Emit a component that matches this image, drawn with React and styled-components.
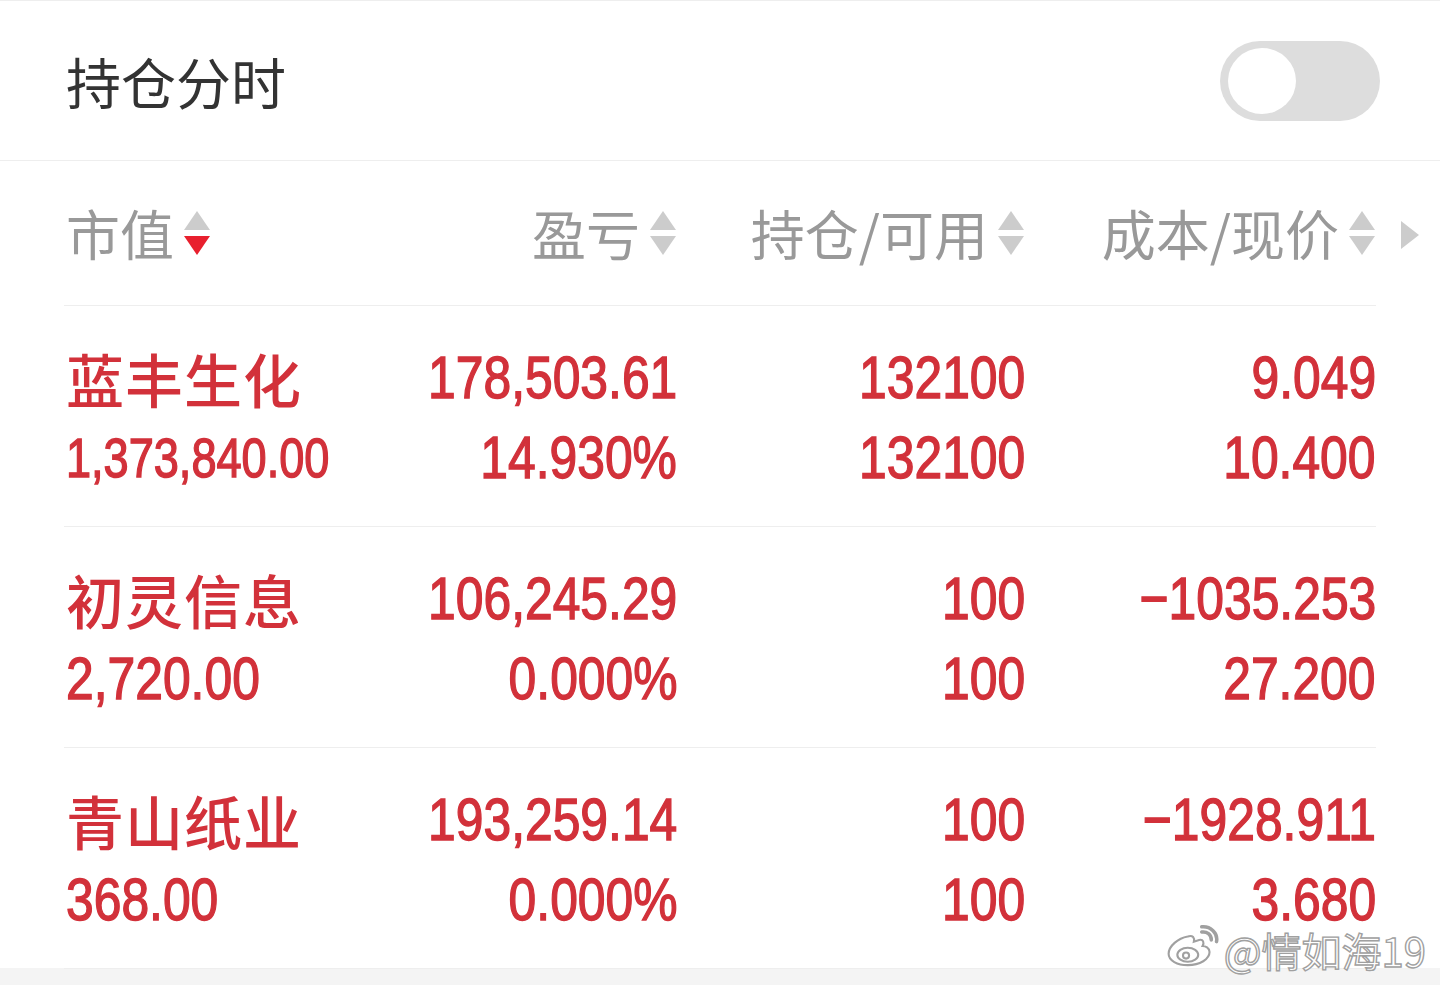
import React from 'react';
import styled, { createGlobalStyle } from 'styled-components';

const RED = '#d2313a';

const GlobalStyle = createGlobalStyle`
  html, body {
    margin: 0;
    padding: 0;
    background: #f4f4f4;
  }
  body {
    font-family: "Noto Sans CJK SC", "Noto Sans", sans-serif;
  }
`;

const rows = [
  {
    name: '蓝丰生化',
    value: '1,373,840.00',
    pnl: '178,503.61',
    pct: '14.930%',
    hold: '132100',
    avail: '132100',
    cost: '9.049',
    price: '10.400',
  },
  {
    name: '初灵信息',
    value: '2,720.00',
    pnl: '106,245.29',
    pct: '0.000%',
    hold: '100',
    avail: '100',
    cost: '-1035.253',
    price: '27.200',
  },
  {
    name: '青山纸业',
    value: '368.00',
    pnl: '193,259.14',
    pct: '0.000%',
    hold: '100',
    avail: '100',
    cost: '-1928.911',
    price: '3.680',
  },
];

const columns = [
  { label: '市值', align: 'left', active: true },
  { label: '盈亏', align: 'right' },
  { label: '持仓/可用', align: 'right' },
  { label: '成本/现价', align: 'right' },
];

const App = () => {
  return (
    <>
      <GlobalStyle />
      <Page>
        <TopBar>
          <Title>持仓分时</Title>
          <Toggle>
            <Knob />
          </Toggle>
        </TopBar>

        <Table>
          <HeaderRow>
            {columns.map(col => (
              <HeaderCell key={col.label} $align={col.align}>
                {col.label}
                <SortIcon active={col.active} />
              </HeaderCell>
            ))}
            <MoreArrow />
          </HeaderRow>

          {rows.map(row => (
            <Row key={row.name}>
              <Cell $align="left">
                <Name>{row.name}</Name>
                {/* long values shrink to fit the first column */}
                <Num $align="left" $small={row.value.length > 10}>{row.value}</Num>
              </Cell>
              <Cell $align="right">
                <Num $align="right">{row.pnl}</Num>
                <Num $align="right">{row.pct}</Num>
              </Cell>
              <Cell $align="right">
                <Num $align="right">{row.hold}</Num>
                <Num $align="right">{row.avail}</Num>
              </Cell>
              <Cell $align="right">
                <Num $align="right">{row.cost.replace('-', '\u2212')}</Num>
                <Num $align="right">{row.price}</Num>
              </Cell>
            </Row>
          ))}

          <Watermark>
            <WeiboLogo />
            <WatermarkText>@情如海19</WatermarkText>
          </Watermark>
        </Table>
        <Footer />
      </Page>
    </>
  );
};

const SortIcon = ({ active }) => (
  <SortSvg width="28" height="48" viewBox="0 0 28 48">
    <polygon points="14,2 27,21 1,21" fill="#cccccc" />
    <polygon points="1,27 27,27 14,46" fill={active ? '#e8202e' : '#cccccc'} />
  </SortSvg>
);

const MoreArrow = () => (
  <ArrowSvg width="20" height="30" viewBox="0 0 20 30">
    <polygon points="1,1 19,15 1,29" fill="#cccccc" />
  </ArrowSvg>
);

const WeiboLogo = () => (
  <svg width="54" height="42" viewBox="0 0 62 46">
    <g fill="#ffffff" stroke="#a0a0a0" strokeWidth="2.4">
      <path d="M25 12c-11 2-22 11-22 20 0 8 10 13 22 13 14 0 25-7 25-15 0-5-5-7-8-7 2-4 1-8-4-7-3 1-6 2-6 2 1-4-1-8-7-6z" />
      <ellipse cx="25" cy="33" rx="12" ry="8" />
      <circle cx="23" cy="34" r="3.5" />
      <path d="M41 7c6-1 11 3 11 9" fill="none" strokeWidth="4" strokeLinecap="round" />
      <path d="M41 1c10-1 19 7 17 17" fill="none" strokeWidth="4" strokeLinecap="round" />
    </g>
  </svg>
);

// Styled Components
const Page = styled.div`
  width: 1440px;
  min-height: 985px;
  background: #f4f4f4;
`;

const TopBar = styled.div`
  display: flex;
  align-items: center;
  justify-content: space-between;
  padding: 0 60px 0 66px;
  background: #ffffff;
  border-top: 1px solid #eeeeee;
  border-bottom: 1px solid #eeeeee;
  box-sizing: border-box;
  height: 161px;
`;

const Title = styled.div`
  font-size: 55px;
  color: #333333;
  line-height: 1;
`;

const Toggle = styled.div`
  width: 160px;
  height: 80px;
  border-radius: 40px;
  background: #dddddd;
  display: flex;
  align-items: center;
  padding-left: 8px;
  box-sizing: border-box;
`;

const Knob = styled.div`
  width: 68px;
  height: 66px;
  border-radius: 50%;
  background: #ffffff;
`;

const Table = styled.div`
  position: relative;
  background: #ffffff;
  padding: 0 64px;
  height: 807px;
  box-sizing: border-box;
`;

const gridCols = `320px 293px 348px 351px`;

const HeaderRow = styled.div`
  position: relative;
  display: grid;
  grid-template-columns: ${gridCols};
  align-items: center;
  height: 144px;
  border-bottom: 1px solid #eeeeee;
`;

const HeaderCell = styled.div`
  display: flex;
  align-items: center;
  justify-content: ${props => (props.$align === 'left' ? 'flex-start' : 'flex-end')};
  padding-left: 2px;
  gap: 9px;
  font-size: 54px;
  line-height: 1;
  color: #999999;
`;

const SortSvg = styled.svg`
  display: block;
  flex: none;
`;

const ArrowSvg = styled.svg`
  position: absolute;
  right: -44px;
  top: 59px;
`;

const Row = styled.div`
  display: grid;
  grid-template-columns: ${gridCols};
  padding: 32px 0 28px;
  border-bottom: 1px solid #eeeeee;

  &:last-of-type {
    border-bottom: none;
  }
`;

const Cell = styled.div`
  display: flex;
  flex-direction: column;
  align-items: ${props => (props.$align === 'left' ? 'flex-start' : 'flex-end')};
  padding-left: 2px;
`;

const Name = styled.div`
  height: 62px;
  margin: 9px 0;
  display: flex;
  align-items: center;
  font-size: 58px;
  font-weight: 500;
  color: ${RED};
  line-height: 1;
  letter-spacing: 1px;
`;

/* digits in the app use a condensed DIN face; squeeze Liberation Sans to its width */
const Num = styled.div`
  height: 52px;
  margin: 14px 0;
  display: flex;
  align-items: center;
  font-family: "Liberation Sans", Arial, sans-serif;
  font-size: ${props => (props.$small ? '55px' : '60px')};
  color: ${RED};
  -webkit-text-stroke: 1.4px ${RED};
  line-height: 1;
  white-space: nowrap;
  transform: scaleX(${props => (props.$small ? 0.82 : 0.83)});
  transform-origin: ${props => (props.$align === 'left' ? 'left center' : 'right center')};
`;

const Watermark = styled.div`
  position: absolute;
  right: 14px;
  bottom: 1px;
  display: flex;
  align-items: flex-end;
  gap: 4px;
  pointer-events: none;
`;

const WatermarkText = styled.span`
  font-family: "Noto Sans CJK SC", "DejaVu Sans", sans-serif;
  font-size: 40px;
  color: #ffffff;
  -webkit-text-stroke: 1.4px #a0a0a0;
  line-height: 34px;
`;

const Footer = styled.div`
  height: 17px;
  background: #f4f4f4;
`;

export default App;
